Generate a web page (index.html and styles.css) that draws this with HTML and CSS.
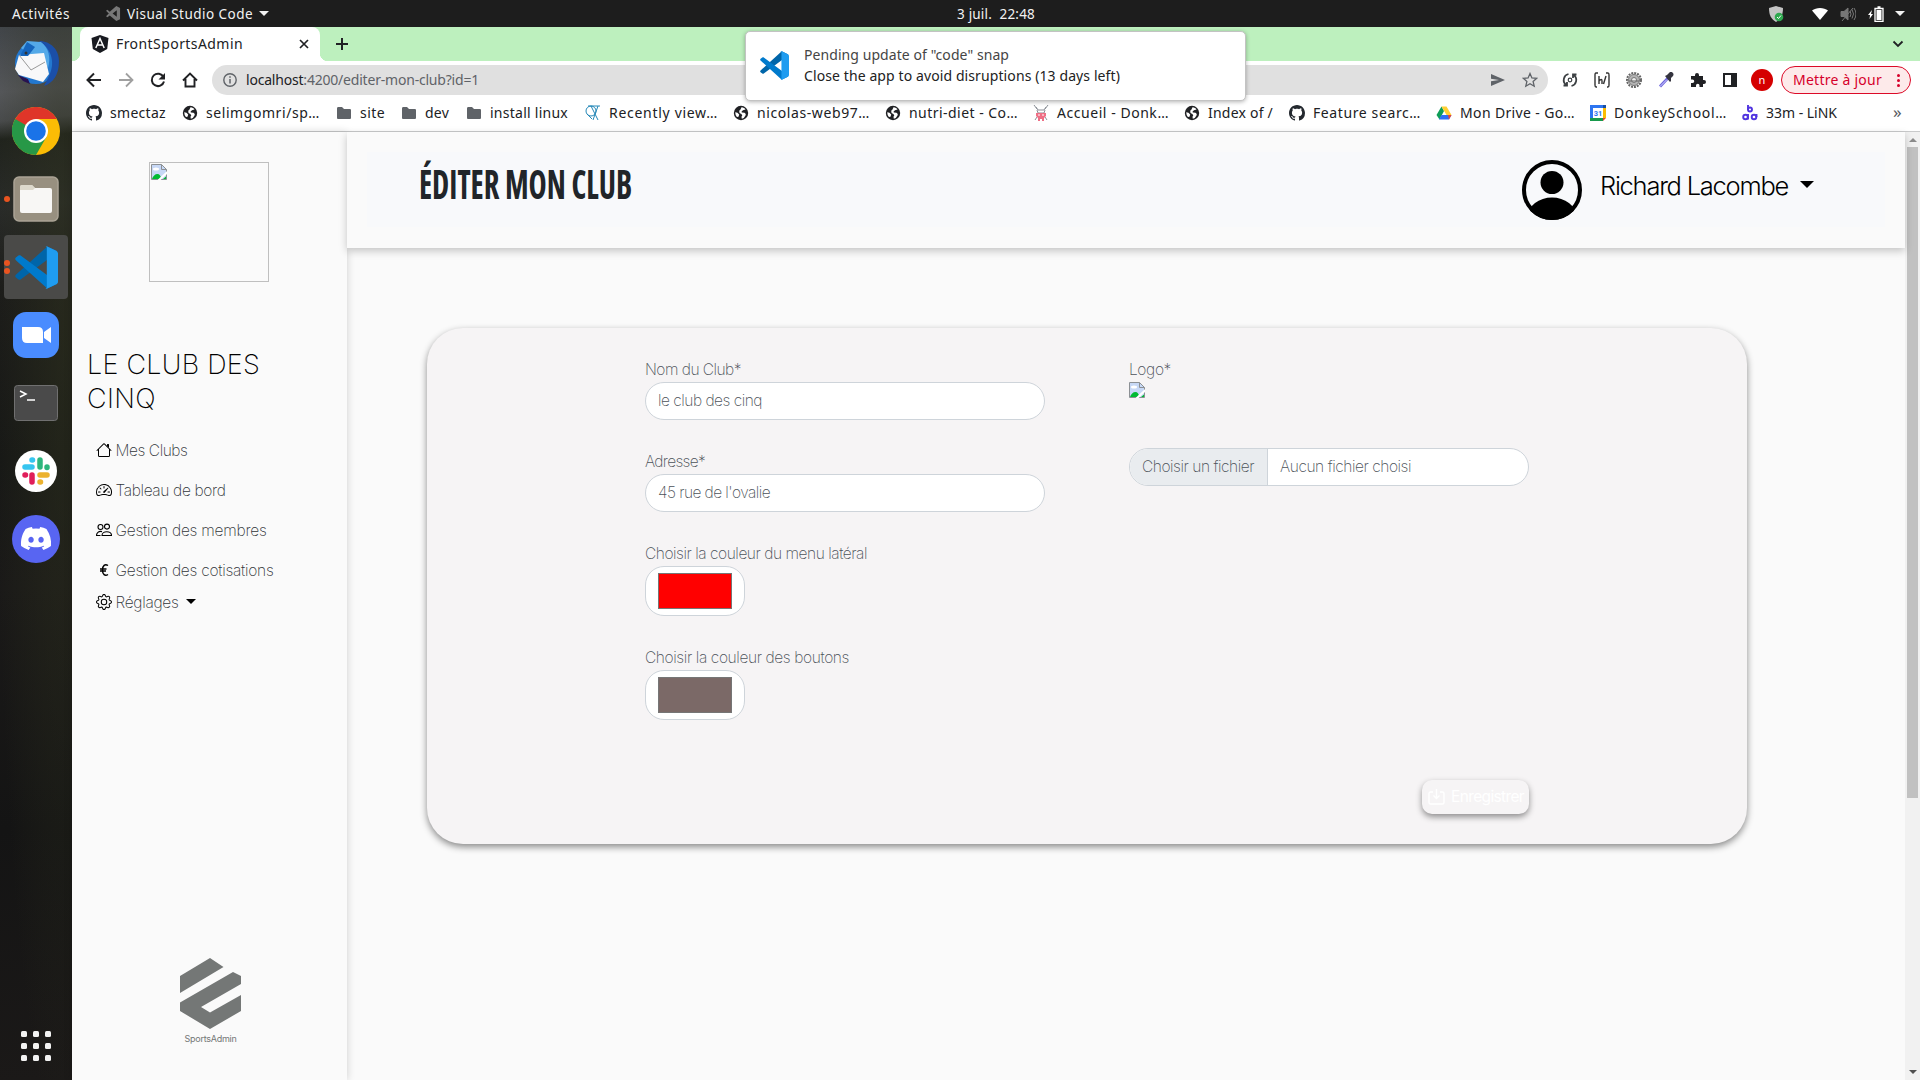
FILE: index.html
```html
<!DOCTYPE html>
<html lang="fr">
<head>
<meta charset="utf-8">
<title>FrontSportsAdmin</title>
<link rel="stylesheet" href="styles.css">
</head>
<body>
<svg class="defs" aria-hidden="true">
  <symbol id="vscode" viewBox="0 0 100 100">
    <path fill="#0065a9" d="M96 11 75 1 2 67c-2 2-2 4 0 6l6 5c2 1 4 1 5 0L98 15z"/>
    <path fill="#007acc" d="M96 89 75 99 2 33c-2-2-2-4 0-6l6-5c2-1 4-1 5 0l85 63z"/>
    <path fill="#1f9cf0" d="M75 99c-2 1-4 0-5-1 2 2 4 0 4-2V4c0-3-3-4-4-2 1-1 3-2 5-1l21 10c2 1 4 4 4 6v66c0 3-2 5-4 6z"/>
  </symbol>
  <symbol id="folder" viewBox="0 0 16 16"><path fill="#5f6368" d="M1 3.5C1 2.600 1.500 2 2.300 2H6l2 2h5.700c.8 0 1.300.5 1.300 1.300v7.400c0 .8-.5 1.300-1.300 1.300H2.300C1.500 14 1 13.500 1 12.700z"/></symbol>
  <symbol id="globe" viewBox="0 0 16 16"><circle cx="8" cy="8" r="7.200" fill="#202124"/><path fill="#fff" d="M8.500 2.300c2 .1 3.200 1 4 2.200L10 5.200 8.600 6.500l.2 1 2.700.2 1.300 1.300-.3 1.500-1.700 2.500-2 .8-.3-2 .8-1.600-1-1.200L6.500 8 6.200 5.800l1.300-1.300zM2.200 7.300l2.300.5 1.700 1.700-.7 2.200-1.600.2A7 7 0 0 1 2.200 7.300z"/></symbol>
  <symbol id="github" viewBox="0 0 16 16"><path fill="#24292f" d="M8 0C3.580 0 0 3.580 0 8c0 3.540 2.290 6.530 5.470 7.590.4.070.55-.17.55-.38 0-.19-.01-.82-.01-1.490-2.010.37-2.530-.49-2.690-.94-.09-.23-.48-.94-.82-1.130-.28-.15-.68-.52-.01-.53.63-.01 1.080.58 1.230.82.72 1.210 1.870.87 2.330.66.070-.52.280-.87.510-1.070-1.780-.2-3.640-.89-3.640-3.950 0-.87.310-1.590.820-2.150-.08-.2-.36-1.020.080-2.120 0 0 .67-.21 2.200.82.640-.18 1.320-.27 2-.27s1.360.090 2 .27c1.530-1.040 2.200-.82 2.200-.82.440 1.100.160 1.920.080 2.120.510.560.820 1.270.820 2.150 0 3.070-1.870 3.750-3.650 3.950.290.250.540.730.540 1.480 0 1.070-.01 1.930-.01 2.200 0 .21.150.46.550.38A8.010 8.010 0 0 0 16 8c0-4.420-3.580-8-8-8z"/></symbol>
  <symbol id="broken" viewBox="0 0 16 16">
    <path fill="#c7d8f6" d="M.5.500h10l5 5v10H.5z"/><ellipse cx="5" cy="5" rx="3" ry="1.500" fill="#fff"/>
    <path fill="#0b3" d="M1 15c1-3 3-5 5.500-5 2 0 3.500 2 4 5zM12 15l3-2.500V15z"/>
    <path fill="none" stroke="#8c9094" d="M10.500.500H.500v15h15v-10zv5h5"/><path stroke="#fff" stroke-width="2.200" d="M7.500 16.500 16.500 8"/>
  </symbol>
</svg>

<header class="topbar">
  <div class="left">
    <span class="activities"><span data-fit="58">Activités</span></span>
    <svg class="app-icon" viewBox="0 0 16 16"><path fill="#777" d="M11 0l4 2v12l-4 2-7-6-2.500 2L0 11l3-3-3-3 1.500-1L4 6zm.5 4.500L7 8l4.500 3.500z"/></svg>
    <span class="app-name"><span data-fit="126">Visual Studio Code</span></span>
    <i class="caret light"></i>
  </div>
  <div class="clock"><span data-fit="78">3 juil.&nbsp; 22:48</span></div>
  <div class="tray">
    <svg viewBox="0 0 16 16" width="16" height="16"><path fill="#c4c4c4" d="M8 0l7 2c0 7-2 11-7 14C3 13 1 9 1 2z"/><circle cx="11" cy="11" r="4.300" fill="#2fa84f"/><path d="m9 11 1.500 1.500L13 9.500" stroke="#fff" fill="none"/></svg>
    <svg viewBox="0 0 16 16" width="16" height="16"><path fill="#fff" d="M0 4.500C4 1 12 1 16 4.500L8 14z"/></svg>
    <svg viewBox="0 0 16 16" width="16" height="16" fill="none" stroke="#777"><path fill="#777" d="M1 5.500h3L8 2v12l-4-3.500H1z"/><path d="M10 5q2 3 0 6M12 3.500q3 4.500 0 9M14 2q4 6 0 12M2 15 13 2"/></svg>
    <svg viewBox="0 0 16 16" width="16" height="16"><path fill="#fff" d="M4 4 0 9h2l-.5 4L5 8H3z"/><path fill="none" stroke="#fff" stroke-width="1.300" d="M7 2.500h8v13H7zM9.500 1h3"/><path fill="#fff" d="M8.500 4h5v10h-5z"/></svg>
    <i class="caret light"></i>
  </div>
</header>

<div class="desktop">
<nav class="dock">
  <div class="app"><svg width="48" height="48" viewBox="0 0 48 48"><circle cx="24" cy="24" r="21" fill="#2378cf"/><path fill="#1b4fa8" d="M27 2c12 0 20 9 20 20 0 14-6 22-15 25l5-10c6-12 4-26-10-35z"/><path fill="#54a9e8" d="M9 9 15 2l14 1c8 6 10 16 7 26-3-10-9-14-19-14z"/><path fill="#f8f8f9" d="M7 16l25-2 5 21-6 8-24-7-4-6z"/><path fill="none" stroke="#999" stroke-width="1" d="m7 16 12 15 14-8"/><path fill="#28124f" d="m6 36 10 4 2 5-7-3z"/><path fill="#1565bd" d="m8 17 7-14 8 5-7 9z"/><circle cx="14" cy="14" r="1.500" fill="#333"/></svg></div>
  <div class="app"><svg width="48" height="48" viewBox="0 0 48 48"><circle cx="24" cy="24" r="24" fill="#fbbc05"/><path fill="#df3529" d="M3.200 12A24 24 0 0 1 44.800 12H24L13.600 30z"/><path fill="#279847" d="M3.200 12A24 24 0 0 0 24 48l10.400-18L24 24z"/><circle cx="24" cy="24" r="12" fill="#fff"/><circle cx="24" cy="24" r="9.800" fill="#1a73e8"/></svg></div>
  <div class="app one"><svg width="46" height="46" viewBox="0 0 46 46"><rect x="1" y="1" width="44" height="44" rx="5" fill="#989080" stroke="#aaa395" stroke-width="1.500"/><path fill="#ddd9cc" d="M7 11q0-2 2-2h10l3 3v4H7z"/><rect x="7" y="12" width="32" height="25" rx="2" fill="#f8f7f5"/><path fill="#ddd9cc" d="M7 14v-3q0-2 2-2h10l3 3-2 2z"/></svg></div>
  <div class="app active two"><svg width="43" height="43"><use href="#vscode"/></svg></div>
  <div class="app"><svg width="46" height="46" viewBox="0 0 46 46"><rect width="46" height="46" rx="13" fill="#4a8cff"/><path fill="#fff" d="M9 15h16q5 0 5 5v11H14q-5 0-5-5zM31 20l7-5v16l-7-5z"/></svg></div>
  <div class="app"><svg width="44" height="36" viewBox="0 0 44 36"><rect x=".5" y=".5" width="43" height="35" rx="3" fill="#4a4a4a" stroke="#707070"/><path fill="none" stroke="#fff" stroke-width="1.500" d="m6 6 6 3-6 3M13 15h8"/></svg></div>
  <div class="app"><svg width="42" height="42" viewBox="0 0 42 42"><circle cx="21" cy="21" r="21" fill="#fff"/><g fill="none" stroke-linecap="round" stroke-width="5.500"><path stroke="#36c5f0" d="M10 17h7M17.500 10h-.5"/><path stroke="#2eb67d" d="M25 10v7M32 17.500v-.5"/><path stroke="#ecb22e" d="M25 25h7M25 32h.5"/><path stroke="#e01e5a" d="M17 25v7M10 25h.5"/></g></svg></div>
  <div class="app"><svg width="48" height="48" viewBox="0 0 48 48"><circle cx="24" cy="24" r="24" fill="#5865f2"/><path fill="#fff" transform="translate(9 8.500) scale(1.880)" d="M13.545 2.907a13.227 13.227 0 0 0-3.257-1.011.05.05 0 0 0-.052.025c-.141.25-.297.577-.406.833a12.190 12.190 0 0 0-3.658 0 8.258 8.258 0 0 0-.412-.833.051.051 0 0 0-.052-.025c-1.125.194-2.220.534-3.257 1.011C.356 6.024-.213 9.047.066 12.032a13.276 13.276 0 0 0 4.016 2.057c.330-.44.620-.89.874-1.348a8.875 8.875 0 0 1-1.276-.665l.314-.280c2.619 1.196 5.454 1.196 8.041 0l.314.280a8.254 8.254 0 0 1-1.279.665c.24.465.515.909.873 1.348a13.235 13.235 0 0 0 4.001-2.057c.334-3.451-.559-6.449-2.399-9.125Zm-8.198 7.307c-.789 0-1.438-.724-1.438-1.612 0-.889.637-1.613 1.438-1.613.807 0 1.450.730 1.438 1.613 0 .888-.637 1.612-1.438 1.612Zm5.316 0c-.788 0-1.438-.724-1.438-1.612 0-.889.637-1.613 1.438-1.613.807 0 1.451.730 1.438 1.613 0 .888-.631 1.612-1.438 1.612Z"/></svg></div>
  <div class="launcher"><i></i><i></i><i></i><i></i><i></i><i></i><i></i><i></i><i></i></div>
</nav>

<div class="browser">
  <div class="tabs">
    <div class="tab">
      <svg width="18" height="18" viewBox="0 0 18 18"><path fill="#181a20" d="M9 0l8.500 3-1.300 11L9 18l-7.200-4L.5 3z"/><path fill="none" stroke="#fff" stroke-width="1.500" d="M4.800 13 9 3.500l4.200 9.500M6.500 10h5"/></svg>
      <span data-fit="127">FrontSportsAdmin</span>
      <svg class="close" width="10" height="10" viewBox="0 0 10 10"><path d="m1 1 8 8M9 1 1 9" stroke="#202124" stroke-width="1.700"/></svg>
    </div>
    <svg class="plus" width="14" height="14" viewBox="0 0 14 14"><path d="M7 1v12M1 7h12" stroke="#202124" stroke-width="2"/></svg>
    <svg class="chev" width="12" height="8" viewBox="0 0 12 8"><path d="m1.500 1.500 4.500 4.500 4.500-4.500" fill="none" stroke="#202124" stroke-width="1.800"/></svg>
  </div>

  <div class="toolbar">
    <svg class="ic" viewBox="0 0 16 16"><path d="M15 8H2M8 1.500 1.500 8 8 14.500" fill="none" stroke="#202124" stroke-width="2"/></svg>
    <svg class="ic" viewBox="0 0 16 16"><path d="M1 8h13M8 1.500 14.500 8 8 14.500" fill="none" stroke="#a0a0a0" stroke-width="1.800"/></svg>
    <svg class="ic" viewBox="0 0 16 16"><path d="M13.500 5A6.200 6.200 0 1 0 14 9.500" fill="none" stroke="#202124" stroke-width="2"/><path fill="#202124" d="M15 1v6.500H8.500z"/></svg>
    <svg class="ic" viewBox="0 0 16 16"><path d="M1 8.500 8 1.500l7 7M3.500 7v7.500h9V7" fill="none" stroke="#202124" stroke-width="1.900"/></svg>
    <div class="omnibox">
      <svg width="14" height="14" viewBox="0 0 14 14"><circle cx="7" cy="7" r="6.200" fill="none" stroke="#5f6368" stroke-width="1.400"/><path d="M7 6v4.500M7 3.200v1.500" stroke="#5f6368" stroke-width="1.500"/></svg>
      <span class="url" data-fit="233"><b>localhost</b>:4200/editer-mon-club?id=1</span>
      <svg class="send" width="14" height="12" viewBox="0 0 14 12"><path fill="#5f6368" d="M0 0l14 6-14 6V7.300L8 6 0 4.700z"/></svg>
      <svg width="16" height="16" viewBox="0 0 16 16"><path d="m8 1.500 1.900 4.400 4.800.400-3.600 3.200 1.100 4.700L8 11.700l-4.200 2.500 1.100-4.700L1.300 6.300l4.800-.400z" fill="none" stroke="#5f6368" stroke-width="1.300"/></svg>
    </div>
    <div class="extensions">
      <svg viewBox="0 0 16 16" fill="none" stroke="#3c4043" stroke-width="1.800"><path d="M6.500 2A6.200 6.200 0 0 0 4 12.800M9.500 14A6.200 6.200 0 0 0 12 3.200M1.500 13.500h3.500V10M14.500 2.500H11V6"/><circle cx="8" cy="8" r="1.800" stroke-width="1.200"/></svg>
      <svg viewBox="0 0 16 16" fill="none" stroke="#333" stroke-width="1.400"><path d="M4 1H2Q1 1 1 3v10q0 2 1 2h1M12 1h2q1 0 1 2v10q0 2-1 2h-1M5 4v8M5 9q3-3 3 0v3M9.500 12 12 4"/></svg>
      <svg viewBox="0 0 16 16" fill="none"><circle cx="8" cy="8" r="7" stroke="#666" stroke-width="2" stroke-dasharray="2 1"/><circle cx="8" cy="8" r="5.500" fill="#b4b4b4" stroke="#777"/><circle cx="8" cy="8" r="2.500" fill="#eee" stroke="#777"/><path stroke="#666" d="M3 9h10"/></svg>
      <svg viewBox="0 0 16 16"><path d="M2 14.500 10 6" stroke="#6b63dc" stroke-width="2.800"/><path d="m2 14.500 7-7" stroke="#d9d6ff"/><path fill="#34343f" d="m7 4 2-1 3-3q2-.5 3 1t0 3l-2 2 0 3-1 1z"/></svg>
      <svg viewBox="0 0 16 16"><path fill="#202124" d="M1 4h4V3a2 2 0 0 1 4 0v1h4v4h1a2 2 0 0 1 0 4h-1v3H9.500v-1.500a1.700 1.700 0 0 0-3.500 0V15H1v-4h1.500a1.700 1.700 0 0 0 0-3.500H1z"/></svg>
      <svg viewBox="0 0 16 16"><path fill="#202124" fill-rule="evenodd" d="M1 1h14v14H1zm2 2v10h6V3z"/></svg>
    </div>
    <span class="profile">n</span>
    <div class="update"><span data-fit="89">Mettre à jour</span><span class="kebab"><i></i><i></i><i></i></span></div>
  </div>

  <div class="bookmarks">
    <a><svg><use href="#github"/></svg><span data-fit="56">smectaz</span></a>
    <a><svg><use href="#globe"/></svg><span data-fit="114">selimgomri/sp…</span></a>
    <a><svg><use href="#folder"/></svg><span data-fit="25">site</span></a>
    <a><svg><use href="#folder"/></svg><span data-fit="24">dev</span></a>
    <a><svg><use href="#folder"/></svg><span data-fit="78">install linux</span></a>
    <a><svg viewBox="0 0 16 16" fill="none" stroke="#2588b8"><circle cx="6" cy="6" r="5"/><path d="M3 1h12M6 1 13 15M13 1 8 15M2 9l5 5"/></svg><span data-fit="109">Recently view…</span></a>
    <a><svg><use href="#globe"/></svg><span data-fit="113">nicolas-web97…</span></a>
    <a><svg><use href="#globe"/></svg><span data-fit="109">nutri-diet - Co…</span></a>
    <a><svg viewBox="0 0 16 16"><path fill="none" stroke="#8b8f96" d="M1 0l3 4M15 0l-3 4M3 2l2 3h6l2-3M4 5l1 3h6l1-3M2 15l2-3M14 15l-2-3"/><path fill="#ee6f85" d="M3 8h10v3l-2 2v3H9v-2H7v2H5v-3l-2-2z"/><path stroke="#fff" d="M5 10h2M9 10h2"/></svg><span data-fit="112">Accueil - Donk…</span></a>
    <a><svg><use href="#globe"/></svg><span data-fit="65">Index of /</span></a>
    <a><svg><use href="#github"/></svg><span data-fit="108">Feature searc…</span></a>
    <a><svg viewBox="0 0 16 16"><path fill="#0f9d58" d="M5.500 1.500 8 6 3.500 14.500.500 10z"/><path fill="#ffcf32" d="M5.500 1.500h5l5 8.500h-5z"/><path fill="#2d6ff3" d="M5.500 10h10l-2.500 4.500H3z"/><path fill="#ea4335" d="M12 10h3.500L13 14.500z"/></svg><span data-fit="115">Mon Drive - Go…</span></a>
    <a><svg viewBox="0 0 16 16"><path fill="#2d75f0" d="M0 0h13v3H3v10H0z"/><path fill="#fbbc04" d="M13 3h3v10h-3z"/><path fill="#17994b" d="M0 13h13v3H0z"/><path fill="#174ea6" d="M13 0h3v3h-3z"/><path fill="#ea4335" d="M13 13h3l-3 3z"/><path fill="#fff" d="M3 3h10v10H3z"/><text x="8" y="11" text-anchor="middle" class="day">31</text></svg><span data-fit="113">DonkeySchool…</span></a>
    <a><svg viewBox="0 0 16 16" fill="none" stroke="#5135e0" stroke-width="1.900"><circle cx="8" cy="4.500" r="2"/><circle cx="3.500" cy="12" r="2.300"/><circle cx="12" cy="12" r="2.300"/><path d="M6 0v5M6 9v5.500M14.500 9v3"/></svg><span data-fit="71">33m - LiNK</span></a>
    <span class="more">»</span>
  </div>

  <div class="page">
    <aside class="sidebar">
      <div class="club-logo"><svg width="16" height="16"><use href="#broken"/></svg></div>
      <h2><span data-fit="173">LE CLUB DES</span><br><span data-fit="69">CINQ</span></h2>
      <ul>
        <li><svg viewBox="0 0 16 16"><path d="M2 13.500V7h1v6.500a.5.5 0 0 0 .5.5h9a.5.5 0 0 0 .5-.5V7h1v6.500a1.500 1.500 0 0 1-1.500 1.500h-9A1.500 1.500 0 0 1 2 13.500zm11-11V6l-2-2V2.500a.5.5 0 0 1 .5-.5h1a.5.5 0 0 1 .5.5z"/><path d="M7.293 1.500a1 1 0 0 1 1.414 0l6.647 6.646a.5.5 0 0 1-.708.708L8 2.207 1.354 8.854a.5.5 0 1 1-.708-.708L7.293 1.500z"/></svg><span data-fit="72">Mes Clubs</span></li>
        <li><svg viewBox="0 0 16 16"><path d="M8 4a.5.5 0 0 1 .5.5V6a.5.5 0 0 1-1 0V4.500A.5.5 0 0 1 8 4zM3.732 5.732a.5.5 0 0 1 .707 0l.915.914a.5.5 0 1 1-.708.708l-.914-.915a.5.5 0 0 1 0-.707zM2 10a.5.5 0 0 1 .5-.5h1.586a.5.5 0 0 1 0 1H2.500A.5.5 0 0 1 2 10zm9.500 0a.5.5 0 0 1 .5-.5h1.500a.5.5 0 0 1 0 1H12a.5.5 0 0 1-.5-.5zm.754-4.246a.389.389 0 0 0-.527-.02L7.547 9.310a.91.91 0 1 0 1.302 1.258l3.434-4.297a.389.389 0 0 0-.029-.518z"/><path fill-rule="evenodd" d="M0 10a8 8 0 1 1 15.547 2.661c-.442 1.253-1.845 1.602-2.932 1.250C11.309 13.488 9.475 13 8 13c-1.474 0-3.310.488-4.615.911-1.087.352-2.490.003-2.932-1.250A7.988 7.988 0 0 1 0 10zm8-7a7 7 0 0 0-6.603 9.329c.203.575.923.876 1.680.63C4.397 12.533 6.358 12 8 12s3.604.532 4.923.96c.757.245 1.477-.056 1.680-.631A7 7 0 0 0 8 3z"/></svg><span data-fit="110">Tableau de bord</span></li>
        <li><svg viewBox="0 0 16 16" fill="none" stroke="#000" stroke-width="1.100"><circle cx="4.500" cy="5" r="2.500"/><circle cx="11" cy="4.600" r="2.500"/><path d="M6 13.500c0-5 9.500-5 9.500 0zM6 9.600C2.500 8.800.5 11 .5 13.500h4"/></svg><span data-fit="151">Gestion des membres</span></li>
        <li><svg viewBox="0 0 16 16" fill="none" stroke="#000" stroke-width="1.500"><path d="M12 3.500C9 1.500 6.500 3.500 6.500 8s2.500 6.500 5.500 4.500M4 7h6.500M4 9h6"/></svg><span data-fit="158">Gestion des cotisations</span></li>
        <li class="tight"><svg viewBox="0 0 16 16"><path fill-rule="evenodd" d="M8 4.754a3.246 3.246 0 1 0 0 6.492 3.246 3.246 0 0 0 0-6.492zM5.754 8a2.246 2.246 0 1 1 4.492 0 2.246 2.246 0 0 1-4.492 0z"/><path d="M9.796 1.343c-.527-1.790-3.065-1.790-3.592 0l-.094.319a.873.873 0 0 1-1.255.52l-.292-.16c-1.640-.892-3.433.902-2.540 2.541l.159.292a.873.873 0 0 1-.52 1.255l-.319.094c-1.790.527-1.790 3.065 0 3.592l.319.094a.873.873 0 0 1 .52 1.255l-.16.292c-.892 1.640.901 3.434 2.541 2.540l.292-.159a.873.873 0 0 1 1.255.52l.094.319c.527 1.790 3.065 1.790 3.592 0l.094-.319a.873.873 0 0 1 1.255-.52l.292.16c1.640.893 3.434-.902 2.540-2.541l-.159-.292a.873.873 0 0 1 .52-1.255l.319-.094c1.790-.527 1.790-3.065 0-3.592l-.319-.094a.873.873 0 0 1-.52-1.255l.16-.292c.893-1.640-.902-3.433-2.541-2.540l-.292.159a.873.873 0 0 1-1.255-.52l-.094-.319zm-2.633.283c.246-.835 1.428-.835 1.674 0l.094.319a1.873 1.873 0 0 0 2.693 1.115l.291-.16c.764-.415 1.600.42 1.184 1.185l-.159.292a1.873 1.873 0 0 0 1.116 2.692l.318.094c.835.246.835 1.428 0 1.674l-.319.094a1.873 1.873 0 0 0-1.115 2.693l.16.291c.415.764-.42 1.600-1.185 1.184l-.291-.159a1.873 1.873 0 0 0-2.693 1.116l-.094.318c-.246.835-1.428.835-1.674 0l-.094-.319a1.873 1.873 0 0 0-2.692-1.115l-.292.16c-.764.415-1.600-.42-1.184-1.185l.159-.291A1.873 1.873 0 0 0 1.945 8.930l-.319-.094c-.835-.246-.835-1.428 0-1.674l.319-.094A1.873 1.873 0 0 0 3.060 4.377l-.16-.292c-.415-.764.42-1.600 1.185-1.184l.292.159a1.873 1.873 0 0 0 2.692-1.115l.094-.319z"/></svg><span data-fit="63">Réglages</span><i class="caret"></i></li>
      </ul>
      <div class="brand">
        <svg width="61" height="71" viewBox="0 0 61 71"><path fill="#747776" d="M30 0 43.500 9 0 35V18zM53 14l8 4v8L21 49l9 5.500L61 37v16L30 71 0 53V44.500z"/></svg>
        <span data-fit="52">SportsAdmin</span>
      </div>
    </aside>

    <main>
      <div class="page-head">
        <div class="head-inner">
          <h1><span data-squeeze="213">ÉDITER MON CLUB</span></h1>
          <svg class="avatar" width="60" height="60" viewBox="0 0 60 60"><clipPath id="disc"><circle cx="30" cy="30" r="30"/></clipPath><circle cx="30" cy="30" r="28" fill="none" stroke="#000" stroke-width="4"/><circle cx="30" cy="22.500" r="11.500"/><ellipse cx="30" cy="56" rx="24" ry="18.500" clip-path="url(#disc)"/></svg>
          <span class="user"><span data-fit="188">Richard Lacombe</span></span>
          <i class="caret big"></i>
        </div>
      </div>
      <form class="card">
        <div class="col">
          <label><span data-fit="96">Nom du Club*</span></label>
          <div class="input"><span data-fit="104">le club des cinq</span></div>
          <label><span data-fit="60">Adresse*</span></label>
          <div class="input"><span data-fit="112">45 rue de l'ovalie</span></div>
          <label><span data-fit="222">Choisir la couleur du menu latéral</span></label>
          <div class="color"><i class="red"></i></div>
          <label><span data-fit="204">Choisir la couleur des boutons</span></label>
          <div class="color"><i class="taupe"></i></div>
        </div>
        <div class="col">
          <label><span data-fit="42">Logo*</span></label>
          <svg class="missing" width="16" height="16"><use href="#broken"/></svg>
          <div class="file"><div class="pick"><span data-fit="112">Choisir un fichier</span></div><div class="chosen"><span data-fit="131">Aucun fichier choisi</span></div></div>
          <div class="save"><svg width="17" height="16" viewBox="0 0 17 16" fill="none" stroke="#fff" stroke-width="1.400"><path d="M5 3H2.500Q1 3 1 4.500v9Q1 15 2.500 15h12q1.500 0 1.500-1.500v-9Q16 3 14.500 3H12M8.500 0v9M5.500 6.500l3 3 3-3"/></svg><span data-fit="73">Enregistrer</span></div>
        </div>
      </form>
    </main>
    <div class="scrollbar"><i class="up"></i><div class="thumb"></div><i class="down"></i></div>
  </div>
</div>
</div>

<div class="toast">
  <svg width="29" height="29"><use href="#vscode"/></svg>
  <div><p><span data-fit="205">Pending update of "code" snap</span></p><p class="body"><span data-fit="316">Close the app to avoid disruptions (13 days left)</span></p></div>
</div>
<script src="fit.js"></script>
</body>
</html>
```
FILE: fit.js
```js
// Tracks each label to its design width.
document.querySelectorAll('[data-fit]').forEach(function (el) {
  var width = el.getBoundingClientRect().width;
  var gap = (Number(el.dataset.fit) - width) / el.textContent.length;
  el.style.letterSpacing = gap.toFixed(3) + 'px';
});
// Condenses the display heading horizontally.
document.querySelectorAll('[data-squeeze]').forEach(function (el) {
  var ratio = Number(el.dataset.squeeze) / el.offsetWidth;
  el.style.transform = 'scaleX(' + ratio.toFixed(4) + ')';
});
```
FILE: styles.css
```css
* { box-sizing: border-box; }
body { margin: 0; width: 1920px; height: 1080px; overflow: hidden; font-family: "Noto Sans", "Open Sans", sans-serif; font-size: 14px; color: #202124; background: #fafafa; }
p, h1, h2, ul { margin: 0; padding: 0; }
svg { display: block; flex: none; }
span { white-space: nowrap; }
.defs { position: absolute; width: 0; height: 0; }

.caret { flex: none; border: 5px solid transparent; border-top-color: #000; border-bottom: 0; }
.caret.light { border-top-color: #f2f2f2; }
.caret.big { border-width: 7px 7.500px 0; }

.topbar { height: 27px; background: #1d1d1d; color: #f2f2f2; display: flex; align-items: center; padding: 0 15px 0 12px; font-size: 13.500px; line-height: 26px; }
.left { width: 945px; display: flex; align-items: center; }
.activities { width: 94px; }
.app-icon { width: 15px; height: 15px; margin-right: 6px; }
.app-name { width: 132px; }
.tray { display: flex; align-items: center; margin-left: auto; }
.tray svg + svg { margin-left: 12px; }
.tray svg:nth-child(2) { margin-left: 28px; }
.tray .caret { margin-left: 11px; }

.desktop { display: flex; height: 1053px; }
.dock { width: 72px; flex: none; display: flex; flex-direction: column; gap: 4px; padding: 4px; background: radial-gradient(ellipse at 90% 28%, #30331f88 0, transparent 70px), linear-gradient(175deg, #414549 0, #55575a 65px, #494b4c 94px, #20231d 112px, #292b29 180px, #1c1c1a 260px, #171816 430px, #1a1918 560px, #141414 800px, #1b1918 1053px); }
.app { position: relative; height: 64px; display: flex; align-items: center; justify-content: center; border-radius: 4px; }
.active { background: #4a4a48; }
.one::before, .two::before, .two::after { content: ""; position: absolute; left: 0; top: 29px; width: 6px; height: 6px; border-radius: 50%; background: #e95420; }
.two::before { top: 25px; }
.two::after { top: 33px; }
.launcher { margin: auto auto 15px; display: grid; grid-template-columns: repeat(3, 6px); gap: 6px; }
.launcher i { height: 6px; background: #f2f2f2; border-radius: 1.500px; }

.browser { flex: 1; display: flex; flex-direction: column; background: #fff; }
.tabs { height: 34px; background: #bdf0be; display: flex; align-items: center; padding-left: 8px; }
.tab { position: relative; width: 240px; height: 34px; background: #fff; border-radius: 8px 8px 0 0; display: flex; align-items: center; padding: 0 11px; }
.tab::before, .tab::after { content: ""; position: absolute; bottom: 0; width: 8px; height: 8px; }
.tab::before { left: -8px; background: radial-gradient(circle at 0 0, transparent 8px, #fff 8.500px); }
.tab::after { right: -8px; background: radial-gradient(circle at 100% 0, transparent 8px, #fff 8.500px); }
.tab span { margin: 0 0 2px 7px; }
.close { margin-left: auto; }
.plus { margin-left: 15px; }
.chev { margin: 0 16px 0 auto; }

.toolbar { height: 38px; display: flex; align-items: center; padding: 0 9px 0 14px; }
.ic { width: 16px; height: 16px; margin-right: 16px; }
.omnibox { width: 1336px; height: 30px; margin-left: -2px; border-radius: 15px; background: #e0e0e0; display: flex; align-items: center; padding: 0 10px 0 11px; }
.url { margin: 0 0 2px 9px; color: #5f6368; }
.url b { font-weight: 400; color: #202124; }
.send { margin: 0 17px 0 auto; }
.extensions { display: flex; gap: 16px; margin-left: 14px; }
.extensions svg { width: 16px; height: 16px; }
.profile { width: 22px; height: 22px; margin-left: 13px; border-radius: 50%; background: #d50000; color: #fff; font-size: 11px; line-height: 21px; text-align: center; }
.update { width: 130px; height: 28px; margin-left: 8px; border: 1px solid #dc0a28; border-radius: 14px; background: #fdeaea; color: #d6002a; display: flex; align-items: center; padding: 0 11px; line-height: 26px; }
.kebab { margin-left: 15px; display: grid; gap: 2px; }
.kebab i { width: 3px; height: 3px; border-radius: 50%; background: #d6002a; }

.bookmarks { height: 33px; border-bottom: 1px solid #c9cacb; display: grid; grid-template-columns: 96px 154px 65px 65px 119px 148px 152px 148px 151px 105px 147px 154px 152px 151px 1fr; padding: 0 0 5px 14px; }
.bookmarks a { display: flex; align-items: center; gap: 8px; line-height: 26px; }
.bookmarks svg { width: 16px; height: 16px; }
.more { font-size: 17px; line-height: 25px; color: #55585c; }
.day { font: 700 7.500px Roboto, sans-serif; fill: #2d75f0; }

.page { flex: 1; display: flex; background: #fafafa; font-family: Inter, "Open Sans", sans-serif; font-size: 15.500px; font-weight: 250; }
.sidebar { width: 275px; flex: none; background: #fafafa; box-shadow: 0 0 8px rgba(0,0,0,.18); display: flex; flex-direction: column; padding-top: 30px; }
.club-logo { width: 120px; height: 120px; margin-left: 77px; border: 1px solid #bfbfbf; padding: 1px; }
h2 { margin: 66px 0 0 15px; font-size: 27px; line-height: 33.600px; font-weight: 200; color: #000; }
.sidebar ul { list-style: none; margin: 15px 0 0 24px; }
.sidebar li { height: 40px; display: flex; align-items: center; color: #303438; }
.sidebar li.tight { height: 24px; }
.sidebar li svg { width: 16px; height: 16px; margin-right: 3.500px; }
.sidebar li .caret { margin: -2px 0 0 7px; }
.brand { margin: auto 0 35px 108px; width: 61px; display: flex; flex-direction: column; align-items: center; font-size: 9px; font-weight: 400; color: #747776; }
.brand span { line-height: 12px; margin-top: 4px; }

main { position: relative; flex: 1; }
.page-head { height: 116px; background: #fafafa; padding: 20px 20px 21px; box-shadow: 0 3px 8px rgba(0,0,0,.22); }
.head-inner { height: 75px; background: #f8f9fb; display: flex; align-items: flex-start; padding: 8px 0 0 53px; }
h1 { width: 1102px; font: 700 40.500px/47px "Open Sans", Roboto, sans-serif; font-stretch: 75%; color: #212529; }
h1 span { display: inline-block; transform-origin: 0 50%; margin-left: -1px; }
.user { margin-left: 18px; width: 200px; line-height: 52px; font-size: 25.500px; font-weight: 350; color: #000; }
.head-inner .caret { margin-top: 21px; }
.card { margin: 80px 0 0 80px; width: 1320px; height: 516px; border-radius: 36px; background: #f6f4f5; box-shadow: 0 3px 7px rgba(0,0,0,.45); display: grid; grid-template-columns: 400px 400px; column-gap: 84px; padding: 30px 0 0 218px; color: #4c5259; }
.col { display: flex; flex-direction: column; }
label { display: block; height: 24px; line-height: 24px; }
.input { height: 38px; border: 1px solid #ced4da; border-radius: 19px; background: #fff; padding: 0 12px; line-height: 36px; margin-bottom: 30px; }
.color { width: 100px; height: 50px; border: 1px solid #ced4da; border-radius: 19px; background: #fff; padding: 6px 12px; margin-bottom: 30px; }
.color i { display: block; height: 36px; border: 1px solid #767676; }
.red { background: #f00; }
.taupe { background: #7b6967; }
.missing { margin-bottom: 50px; }
.file { height: 38px; border: 1px solid #ced4da; border-radius: 19px; background: #fff; display: flex; overflow: hidden; line-height: 36px; }
.pick { width: 138px; background: #e9ecef; border-right: 1px solid #ced4da; padding-left: 12px; }
.chosen { padding-left: 12px; }
.save { margin: 294px 0 0 auto; width: 107px; height: 34px; border-radius: 10px; box-shadow: 0 3px 6px rgba(0,0,0,.42); background: #f6f4f5; color: #fff; display: flex; align-items: center; gap: 6px; padding-left: 6px; line-height: 32px; font-weight: 400; }

.scrollbar { width: 15px; background: #f1f1f1; display: flex; flex-direction: column; align-items: center; padding: 6px 0; }
.scrollbar i { border: 4px solid transparent; }
.scrollbar .up { border-top: 0; border-bottom-color: #8b8b8b; }
.scrollbar .down { border-bottom: 0; border-top-color: #505050; margin-top: auto; }
.thumb { width: 11px; height: 651px; margin-top: 5px; background: #c1c1c1; }

.toast { position: absolute; left: 745px; top: 31px; width: 501px; height: 70px; border: 1px solid #c3c3c3; border-radius: 5px; background: #fff; box-shadow: 0 1px 4px rgba(0,0,0,.3); display: flex; align-items: center; padding: 0 0 2px 14px; gap: 15px; font-size: 14px; line-height: 21px; color: #454545; }
.toast .body { color: #222; }
```
